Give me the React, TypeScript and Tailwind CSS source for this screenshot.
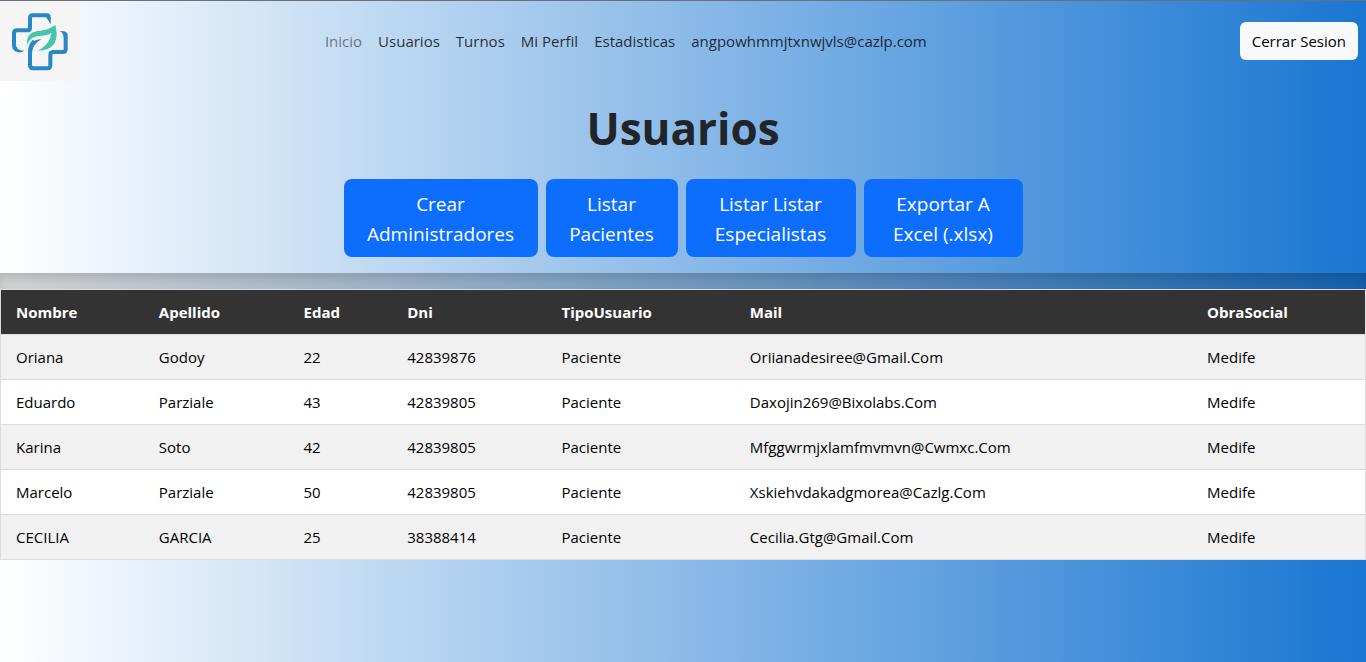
const links = ['Inicio', 'Usuarios', 'Turnos', 'Mi Perfil', 'Estadisticas', 'angpowhmmjtxnwjvls@cazlp.com'];

const actions = [
  { lines: ['Crear', 'Administradores'], width: 'w-[194px]' },
  { lines: ['Listar', 'Pacientes'], width: 'w-[132px]' },
  { lines: ['Listar Listar', 'Especialistas'], width: 'w-[170px]' },
  { lines: ['Exportar A', 'Excel (.xlsx)'], width: 'w-[159px]' },
];

const columns = [
  { name: 'Nombre', width: 'w-[10.5%]' },
  { name: 'Apellido', width: 'w-[10.6%]' },
  { name: 'Edad', width: 'w-[7.6%]' },
  { name: 'Dni', width: 'w-[11.3%]' },
  { name: 'TipoUsuario', width: 'w-[13.8%]' },
  { name: 'Mail', width: 'w-[33.5%]' },
  { name: 'ObraSocial', width: 'w-[12.7%]' },
];

const rows = [
  ['Oriana', 'Godoy', '22', '42839876', 'Paciente', 'Oriianadesiree@Gmail.Com', 'Medife'],
  ['Eduardo', 'Parziale', '43', '42839805', 'Paciente', 'Daxojin269@Bixolabs.Com', 'Medife'],
  ['Karina', 'Soto', '42', '42839805', 'Paciente', 'Mfggwrmjxlamfmvmvn@Cwmxc.Com', 'Medife'],
  ['Marcelo', 'Parziale', '50', '42839805', 'Paciente', 'Xskiehvdakadgmorea@Cazlg.Com', 'Medife'],
  ['CECILIA', 'GARCIA', '25', '38388414', 'Paciente', 'Cecilia.Gtg@Gmail.Com', 'Medife'],
];

function Logo() {
  return (
    <svg viewBox="0 0 240 240" className="size-20 shrink-0 bg-[#f5f5f5]" role="img" aria-label="Clinica">
      <g fill="none" stroke="#2a87c5" strokeWidth="12" strokeLinejoin="round">
        <path d="M146 54V48Q146 43 140 43H98Q90 43 90 51V80Q90 88 82 88H51Q42 88 42 97V132Q42 142 50 146" />
        <path d="M197 110V145Q197 153 189 153H160Q151 153 151 162V193Q151 202 142 202H100Q90 202 90 192V156Q90 132 103 121" />
      </g>
      <g fill="#2a87c5">
        <path d="M140 50H152L152 70Z" />
        <path d="M203 112V100Q200 88 179 90Q190 94 191 112Z" />
        <path d="M47 138Q55 149 73 149Q64 156 53 154Q44 152 38 142Z" />
        <path d="M84 160Q84 116 124 115Q96 130 96 160Z" />
      </g>
      <path
        fill="#45c5a9"
        d="M82 133C78 98 98 91 122 89C143 87 153 79 166 72C175 105 169 133 143 144C134 148 124 149 113 149C138 137 151 119 154 96C143 103 132 104 117 105C98 107 86 116 82 133Z"
      />
    </svg>
  );
}

export default function App() {
  return (
    <div className="min-h-screen border-t border-[#68717b] bg-[linear-gradient(to_right,#ffffff,#1976d2)] font-['Open_Sans','Noto_Sans',sans-serif] text-[15px] leading-6 text-[#212529]">
      <header className="flex items-center pr-2">
        <Logo />
        <nav className="flex flex-1 justify-center gap-4 pr-[68px]" aria-label="Principal">
          {links.map((link, i) => (
            <a key={link} href="#" className={i === 0 ? 'text-black/50' : 'text-black/80'}>
              {link}
            </a>
          ))}
        </nav>
        <button type="button" className="h-[38px] rounded-md bg-[#f8f9fa] px-3 text-black">
          Cerrar Sesion
        </button>
      </header>

      <main>
        <h1 className="pt-[18px] text-center text-[44px] leading-[58px] font-bold">Usuarios</h1>
        <div className="flex flex-wrap justify-center gap-2 pt-[22px] pb-4">
          {actions.map(({ lines, width }) => (
            <button
              key={lines[1]}
              type="button"
              className={`${width} rounded-lg bg-[#0d6efd] pt-[10px] pb-2 text-[19px] leading-[30px] text-white`}
            >
              {lines[0]}
              <br />
              {lines[1]}
            </button>
          ))}
        </div>
        <div className="bg-black/18 pt-4 shadow-[inset_0_5px_8px_rgba(0,0,0,0.12)]">
          <table className="w-full table-fixed border-collapse border border-[#dddddd] text-left text-black">
            <thead className="bg-[#333333] text-white">
              <tr className="border-b border-[#dddddd]">
                {columns.map(({ name, width }) => (
                  <th key={name} scope="col" className={`${width} px-[15px] py-[10px] font-bold`}>
                    {name}
                  </th>
                ))}
              </tr>
            </thead>
            <tbody>
              {rows.map((row) => (
                <tr key={row[5]} className="border-b border-[#dddddd] bg-white odd:bg-[#f1f1f1]">
                  {row.map((cell, i) => (
                    <td key={columns[i].name} className="px-[15px] py-[10px]">
                      {cell}
                    </td>
                  ))}
                </tr>
              ))}
            </tbody>
          </table>
        </div>
      </main>
    </div>
  );
}
